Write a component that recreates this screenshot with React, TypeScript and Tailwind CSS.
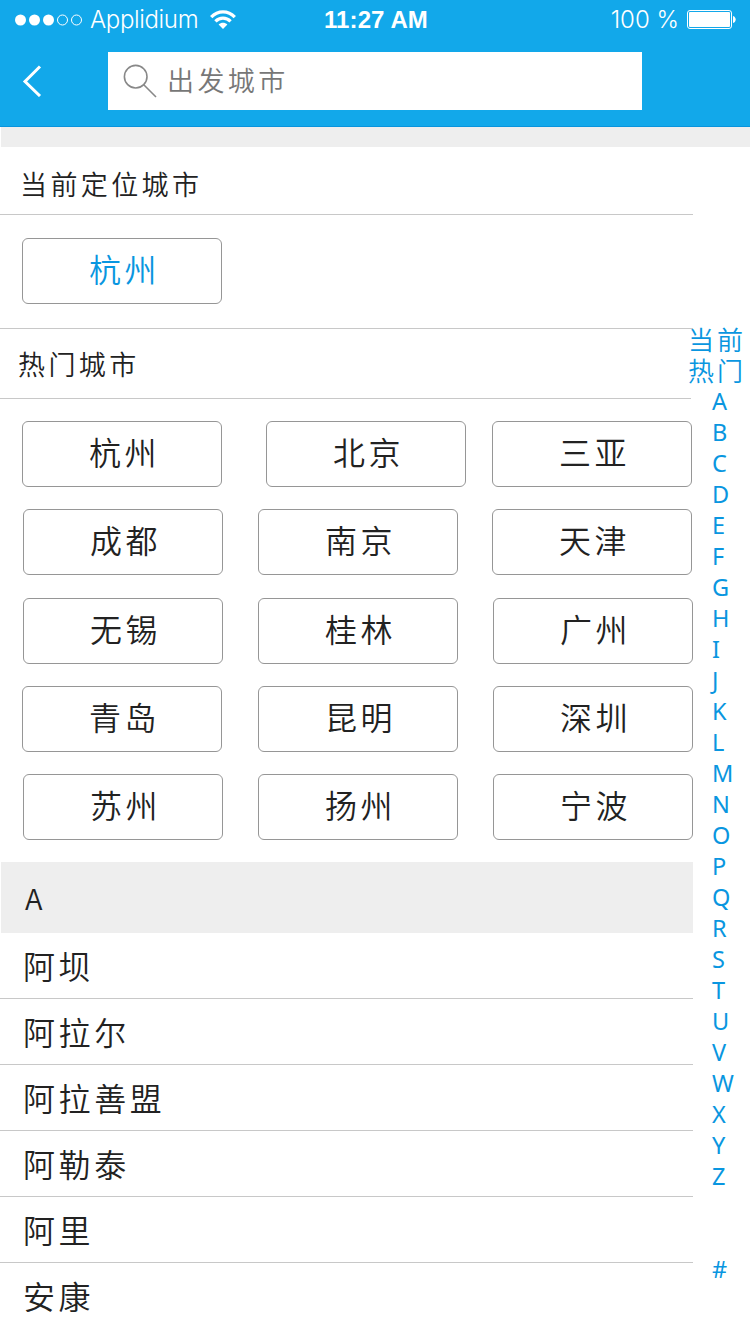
const hotCities = [
    { names: ["杭州", "北京", "三亚"], row: "pl-[22px]", second: "ml-[44px]", third: "ml-[26px]" },
    { names: ["成都", "南京", "天津"], row: "pl-[23px] mt-[22px]", second: "ml-[35px]", third: "ml-[34px]" },
    { names: ["无锡", "桂林", "广州"], row: "pl-[23px] mt-[23px]", second: "ml-[35px]", third: "ml-[35px]" },
    { names: ["青岛", "昆明", "深圳"], row: "pl-[22px] mt-[22px]", second: "ml-[36px]", third: "ml-[35px]" },
    { names: ["苏州", "扬州", "宁波"], row: "pl-[23px] mt-[22px]", second: "ml-[35px]", third: "ml-[35px]" },
];

const cities = ["阿坝", "阿拉尔", "阿拉善盟", "阿勒泰", "阿里", "安康"];

const letters = "ABCDEFGHIJKLMNOPQRSTUVWXYZ".split("");

const StatusBar = () => {
    return (
        <div className="flex h-10 items-center pl-[15px] pr-[14px] text-white font-['Liberation_Sans',sans-serif]">
            <div className="flex w-[309px] items-center">
                <svg width="68" height="12" viewBox="0 0 68 12" fill="white">
                    <circle cx="5.5" cy="6" r="5.5" />
                    <circle cx="19.5" cy="6" r="5.5" />
                    <circle cx="33.5" cy="6" r="5.5" />
                    <circle cx="47.5" cy="6" r="5" fill="none" stroke="white" />
                    <circle cx="61.5" cy="6" r="5" fill="none" stroke="white" />
                </svg>
                <span className="ml-[7px] w-[108px] whitespace-nowrap font-['Inter',sans-serif] text-[24px] font-light leading-10 tracking-[-0.35px]">
                    Applidium
                </span>
                <svg className="ml-[12px]" width="26" height="20" viewBox="0 0 26 20" fill="none" stroke="white" strokeWidth="3.2">
                    <path d="M1.2 7.2C7.8 .2 18.2 .2 24.8 7.2" />
                    <path d="M5.4 11.4C9.8 7 16.2 7 20.6 11.4" />
                    <path d="M8.6 14.5C11.2 12.2 14.8 12.2 17.4 14.5L13 19Z" fill="white" stroke="none" />
                </svg>
            </div>
            <span className="w-[110px] whitespace-nowrap text-[24px] font-bold leading-10 tracking-[0.1px]">11:27 AM</span>
            <div className="ml-auto flex items-center">
                <span className="whitespace-nowrap font-['Inter',sans-serif] text-[24px] font-light leading-10">100 %</span>
                <svg className="ml-[8px]" width="49" height="20" viewBox="0 0 49 20">
                    <rect x=".5" y=".5" width="44" height="18" rx="2.5" fill="none" stroke="white" />
                    <rect x="2" y="2" width="41" height="15" rx="1" fill="white" />
                    <path d="M46 6C49.6 7 49.6 12 46 13Z" fill="white" />
                </svg>
            </div>
        </div>
    );
};

const CityButton = ({ name, className = "" }: { name: string; className?: string }) => {
    return (
        <button
            className={`h-[66px] w-[200px] shrink-0 rounded-[6px] border border-[#969696] pb-[6px] pl-[5px] text-[32px] font-[350] leading-none tracking-[3.6px] ${className}`}
        >
            {name}
        </button>
    );
};

const App = () => {
    return (
        <div className="h-[1334px] w-[750px] overflow-hidden bg-white font-['Noto_Sans_CJK_SC',sans-serif] text-[#222]">
            <header className="h-[127px] border-b border-[#0894dd] bg-[#12a8ea]">
                <StatusBar />
                <div className="flex pt-3">
                    <svg className="ml-[22px] mt-[13px]" width="20" height="32" viewBox="0 0 20 32" fill="none" stroke="white" strokeWidth="3">
                        <path d="M18 1.5L3 16.5L18 31" />
                    </svg>
                    <div className="ml-[66px] flex h-[58px] w-[534px] items-center bg-white">
                        <svg className="ml-[15px]" width="34" height="34" viewBox="0 0 34 34" fill="none" stroke="#888" strokeWidth="1.6">
                            <circle cx="12.7" cy="12.7" r="11.3" />
                            <path d="M20.5 20.5L33 33" />
                        </svg>
                        <span className="ml-[10px] pb-[3px] text-[27px] font-[350] leading-none tracking-[3.4px] text-[#777]">出发城市</span>
                    </div>
                </div>
            </header>
            <div className="ml-px h-5 bg-[#eee]" />

            <div className="flex">
                <main className="w-[693px] shrink-0">
                    <h2 className="flex h-[68px] items-center border-b border-[#c8c8c8] pl-5 pt-[5px] text-[27px] font-[350] leading-none tracking-[3.4px]">
                        当前定位城市
                    </h2>
                    <div className="h-[114px] border-b border-[#c8c8c8] pl-[22px] pt-[23px]">
                        <CityButton name="杭州" className="text-[#0996e0]" />
                    </div>
                    <h2 className="mr-[2px] flex h-[70px] items-center border-b border-[#c8c8c8] pl-[18px] text-[27px] font-[350] leading-none tracking-[3.4px]">
                        热门城市
                    </h2>
                    <div className="h-[463px] pt-[22px]">
                        {hotCities.map(({ names, row, second, third }) => (
                            <div key={names[0]} className={`flex ${row}`}>
                                <CityButton name={names[0]} />
                                <CityButton name={names[1]} className={second} />
                                <CityButton name={names[2]} className={third} />
                            </div>
                        ))}
                    </div>
                    <h3 className="ml-px flex h-[71px] items-center bg-[#eee] pl-6 text-[29px] font-[350] leading-none">A</h3>
                    <ul>
                        {cities.map((city) => (
                            <li
                                key={city}
                                className="flex h-[66px] items-center border-b border-[#c8c8c8] pb-[2px] pl-[23px] text-[32px] font-[350] leading-none tracking-[3.6px] last:border-white"
                            >
                                {city}
                            </li>
                        ))}
                    </ul>
                </main>

                <nav className="-ml-[5px] mt-[176px] w-[62px] shrink-0 whitespace-nowrap text-[#0996e0]">
                    <div className="h-[31px] text-[26px] font-[350] leading-[31px] tracking-[3px]">当前</div>
                    <div className="h-[31px] text-[26px] font-[350] leading-[31px] tracking-[3px]">热门</div>
                    <div className="pl-6 pt-px font-['Noto_Sans',sans-serif] text-[23.5px] leading-[31px]">
                        {letters.map((letter) => (
                            <div key={letter} className="h-[31px]">{letter}</div>
                        ))}
                        <div className="mt-[62px] h-[31px]">#</div>
                    </div>
                </nav>
            </div>
        </div>
    );
};

export default App;
